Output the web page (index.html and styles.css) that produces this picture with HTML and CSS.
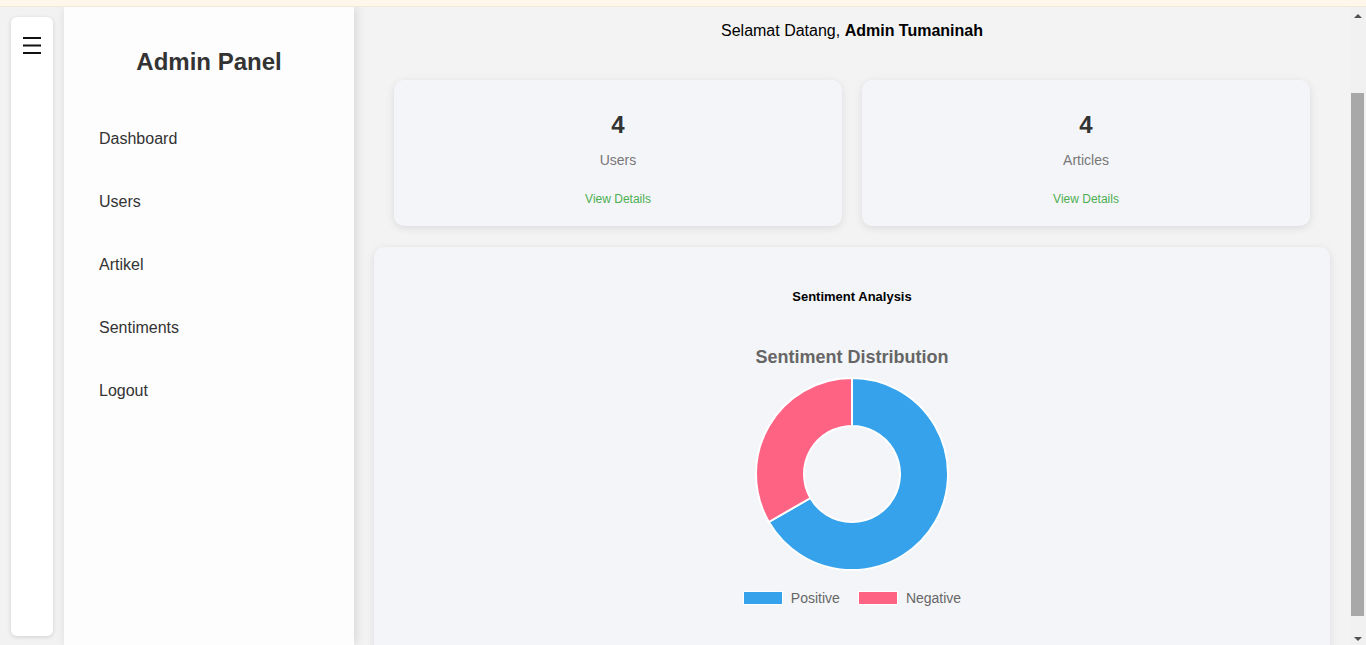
FILE: index.html
```html
<!DOCTYPE html>
<html lang="id">
<head>
<meta charset="utf-8">
<title>Admin Panel</title>
<link rel="stylesheet" href="styles.css">
</head>
<body>
<div class="topbar"></div>
<div class="app">
  <aside class="rail">
    <div class="rail-card">
      <button class="menu-btn" aria-label="Menu">
        <svg width="18" height="18" viewBox="0 0 18 18"><rect x="0" y="0" width="18" height="2" fill="#111"/><rect x="0" y="7.5" width="18" height="2" fill="#111"/><rect x="0" y="15" width="18" height="2" fill="#111"/></svg>
      </button>
    </div>
  </aside>
  <nav class="sidebar">
    <h2 class="brand">Admin Panel</h2>
    <ul class="menu">
      <li>Dashboard</li>
      <li>Users</li>
      <li>Artikel</li>
      <li>Sentiments</li>
      <li>Logout</li>
    </ul>
  </nav>
  <main class="main">
    <p class="welcome">Selamat Datang, <strong>Admin Tumaninah</strong></p>
    <section class="stats">
      <div class="stat-card">
        <div class="stat-num">4</div>
        <div class="stat-label">Users</div>
        <a class="stat-link">View Details</a>
      </div>
      <div class="stat-card">
        <div class="stat-num">4</div>
        <div class="stat-label">Articles</div>
        <a class="stat-link">View Details</a>
      </div>
    </section>
    <section class="chart-card">
      <h3 class="chart-heading">Sentiment Analysis</h3>
      <div class="chart-title">Sentiment Distribution</div>
      <svg class="donut" width="200" height="200" viewBox="0 0 200 200">
        <path d="M100 4 A96 96 0 1 1 16.86 148 L58.43 124 A48 48 0 1 0 100 52 Z" fill="#36a2eb" stroke="#fff" stroke-width="2" stroke-linejoin="round"/>
        <path d="M16.86 148 A96 96 0 0 1 100 4 L100 52 A48 48 0 0 0 58.43 124 Z" fill="#ff6384" stroke="#fff" stroke-width="2" stroke-linejoin="round"/>
      </svg>
      <div class="legend">
        <span class="legend-item"><span class="swatch blue"></span>Positive</span>
        <span class="legend-item"><span class="swatch pink"></span>Negative</span>
      </div>
    </section>
  </main>
  <div class="scrollbar">
    <span class="arrow up"></span>
    <div class="track"><div class="thumb"></div></div>
    <span class="arrow down"></span>
  </div>
</div>
</body>
</html>
```
FILE: styles.css
```css
* { box-sizing: border-box; }
html, body { margin: 0; padding: 0; height: 645px; overflow: hidden; }
body { font-family: "Liberation Sans", Arial, sans-serif; background: #f2f2f2; color: #333; }

.topbar { height: 7px; background: #fff8ea; border-bottom: 1px solid #f0e8d8; }

.app { display: flex; height: 638px; overflow: hidden; }

.rail { width: 64px; flex: none; background: #f2f2f2; padding: 10px 11px 0 11px; }
.rail-card {
  width: 42px; height: 619px; background: #fff; border-radius: 6px;
  box-shadow: 0 1px 4px rgba(0,0,0,0.15);
  display: flex; justify-content: center; padding-top: 20px;
}
.menu-btn { border: 0; background: none; padding: 0; width: 18px; height: 18px; display: block; }
.menu-btn svg { display: block; }

.sidebar {
  width: 290px; flex: none; background: #fdfdfd; position: relative; z-index: 1;
  box-shadow: 2px 0 10px rgba(0,0,0,0.12); padding-top: 41px;
}
.brand { margin: 0; text-align: center; font-size: 24px; line-height: 28px; font-weight: bold; color: #333; }
.menu { list-style: none; margin: 31px 0 0; padding: 0; }
.menu li { padding: 22px 35px; font-size: 16px; line-height: 19px; color: #333; }

.main { flex: 1; min-width: 0; background: #f3f3f3; padding: 15px 20px 0 20px; }
.welcome { margin: 0; text-align: center; font-size: 16px; line-height: 18px; color: #000; }
.welcome strong { font-weight: bold; }

.stats { display: flex; gap: 20px; margin: 40px 20px 0; }
.stat-card {
  flex: 1; background: #f4f5f9; border-radius: 10px; height: 146px;
  box-shadow: 0 2px 8px rgba(0,0,0,0.1);
  display: flex; flex-direction: column; align-items: center; padding-top: 31px;
}
.stat-num { font-size: 24px; line-height: 28px; font-weight: bold; color: #333; }
.stat-label { margin-top: 13px; font-size: 14px; line-height: 16px; color: #777; }
.stat-link { margin-top: 24px; font-size: 12px; line-height: 14px; color: #4caf50; text-decoration: none; }

.chart-card {
  margin-top: 21px; background: #f4f5f9; border-radius: 10px;
  box-shadow: 0 2px 8px rgba(0,0,0,0.1);
  display: flex; flex-direction: column; align-items: center;
  padding: 42px 0 60px;
}
.chart-heading { margin: 0; font-size: 13px; line-height: 15px; font-weight: bold; color: #000; }
.chart-title { margin-top: 42px; font-size: 18px; line-height: 22px; font-weight: bold; color: #666; }
.donut { display: block; margin-top: 6px; }
.legend { display: flex; align-items: center; gap: 18px; margin-top: 16px; height: 16px; font-size: 14px; color: #666; }
.legend-item { display: flex; align-items: center; gap: 8px; }
.swatch { width: 40px; height: 14px; border: 1px solid #fff; display: block; }
.swatch.blue { background: #36a2eb; }
.swatch.pink { background: #ff6384; }

.scrollbar { width: 16px; flex: none; background: #f1f1f1; display: flex; flex-direction: column; align-items: center; }
.arrow { width: 0; height: 0; border-left: 4px solid transparent; border-right: 4px solid transparent; display: block; }
.arrow.up { border-bottom: 4px solid #505050; margin-top: 7px; }
.arrow.down { border-top: 4px solid #505050; margin-bottom: 4px; }
.track { flex: 1; width: 100%; padding: 75px 2px 0 1px; }
.thumb { height: 523px; background: #a8a8a8; }
```
